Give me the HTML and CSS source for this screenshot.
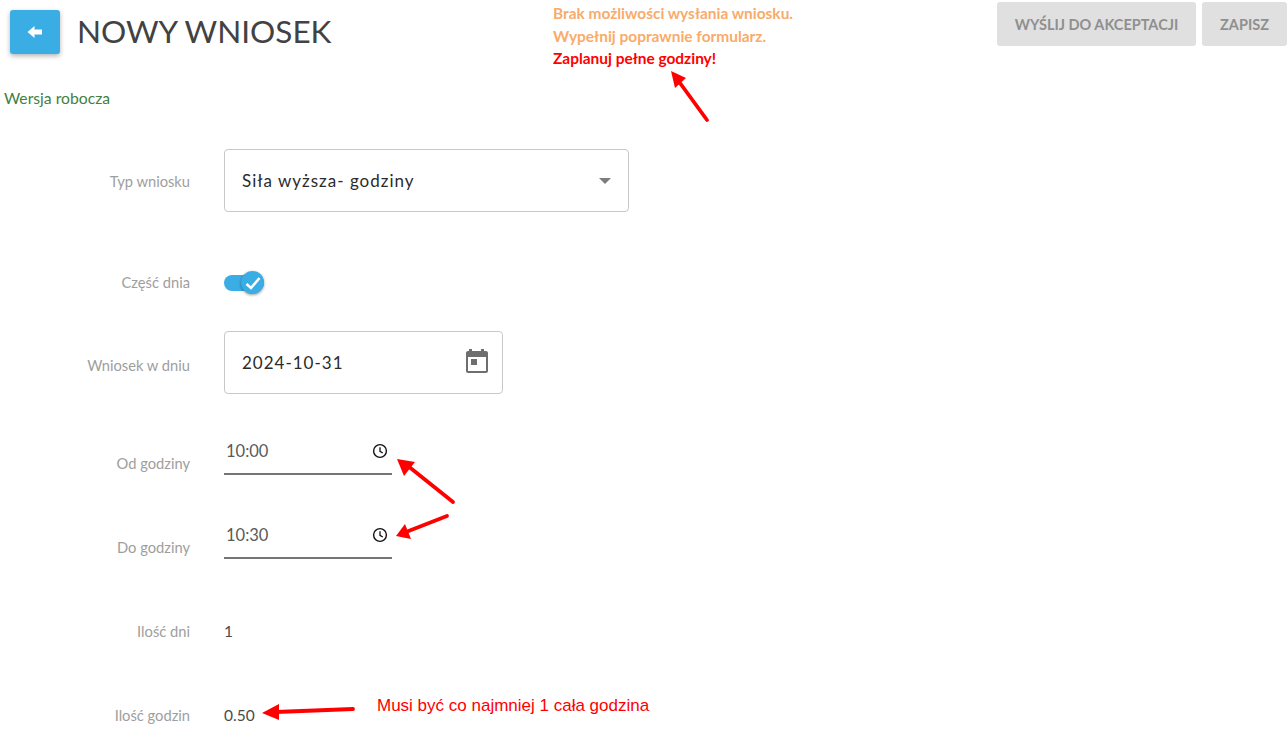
FILE: index.html
```html
<!DOCTYPE html>
<html lang="pl">
<head>
    <meta charset="UTF-8">
    <meta name="viewport" content="width=device-width, initial-scale=1.0">
    <title>Nowy wniosek</title>
    <link rel="stylesheet" href="styles.css">
</head>
<body>
    <div class="page">
        <header class="top">
            <button class="back" aria-label="Wstecz">
                <svg width="16" height="14" viewBox="0 0 16 14"><path d="M0.5 7 L7.5 1 V4.500 H15 V9.500 H7.500 V13 Z" fill="#fff"/></svg>
            </button>
            <h1>NOWY WNIOSEK</h1>
            <div class="messages">
                <p>Brak możliwości wysłania wniosku.</p>
                <p>Wypełnij poprawnie formularz.</p>
                <p class="danger">Zaplanuj pełne godziny!</p>
            </div>
            <div class="actions">
                <button class="btn btn-send">WYŚLIJ DO AKCEPTACJI</button>
                <button class="btn btn-save">ZAPISZ</button>
            </div>
        </header>

        <div class="status">Wersja robocza</div>

        <div class="row row-type">
            <label>Typ wniosku</label>
            <div class="field select">
                <span>Siła wyższa- godziny</span>
                <span class="caret"></span>
            </div>
        </div>

        <div class="row row-part">
            <label>Część dnia</label>
            <div class="toggle">
                <span class="knob">
                    <svg width="16" height="14" viewBox="0 0 16 14"><path d="M1.500 8 L6 12 L14.500 2" fill="none" stroke="#fff" stroke-width="2.500"/></svg>
                </span>
            </div>
        </div>

        <div class="row row-date">
            <label>Wniosek w dniu</label>
            <div class="field date">
                <span>2024-10-31</span>
                <svg class="cal" width="22" height="24" viewBox="0 0 22 24"><path fill="#6e6e6e" fill-rule="evenodd" d="M3 0h3v2h9V0h3v2h2c1.100 0 2 .9 2 2v18c0 1.100-.9 2-2 2H2c-1.100 0-2-.9-2-2V4c0-1.100.9-2 2-2h1zM2 8v14h18V8zM5 10h6v6H5z"/></svg>
            </div>
        </div>

        <div class="row row-time">
            <label>Od godziny</label>
            <div class="time">
                <span>10:00</span>
                <svg width="16" height="16" viewBox="0 0 16 16"><circle cx="8" cy="8" r="6.400" fill="none" stroke="#111" stroke-width="1.400"/><path d="M8 4.300 V8.300 L10.800 10" fill="none" stroke="#111" stroke-width="1.300"/></svg>
            </div>
        </div>

        <div class="row row-time">
            <label>Do godziny</label>
            <div class="time">
                <span>10:30</span>
                <svg width="16" height="16" viewBox="0 0 16 16"><circle cx="8" cy="8" r="6.400" fill="none" stroke="#111" stroke-width="1.400"/><path d="M8 4.300 V8.300 L10.800 10" fill="none" stroke="#111" stroke-width="1.300"/></svg>
            </div>
        </div>

        <div class="row row-days">
            <label>Ilość dni</label>
            <div class="value">1</div>
        </div>

        <div class="row row-hours">
            <label>Ilość godzin</label>
            <div class="value">0.50</div>
        </div>

        <!-- annotations drawn over the screenshot -->
        <svg class="arrows" width="1288" height="738" viewBox="0 0 1288 738">
            <g stroke="#f00" stroke-width="3.800" stroke-linecap="round" fill="#f00">
                <path d="M707 120 L680 83"/>
                <path d="M453 502 L408 466"/>
                <path d="M447 516 L406 532"/>
                <path d="M353 709 L276 712"/>
            </g>
            <g fill="#f00">
                <path d="M671 71 L686 78 L675 88 Z"/>
                <path d="M397 459 L415 462 L404 476 Z"/>
                <path d="M396 536 L405 524 L411 539 Z"/>
                <path d="M262 713 L279 704 L279 720 Z"/>
            </g>
        </svg>
        <div class="note">Musi być co najmniej 1 cała godzina</div>
    </div>
</body>
</html>
```

FILE: styles.css
```css
* {
    box-sizing: border-box;
}
html, body {
    margin: 0;
    padding: 0;
    background-color: #fff;
}
body {
    font-family: Lato, Arial, sans-serif;
    color: #424242;
}
p {
    margin: 0;
}
.page {
    position: relative;
    width: 1288px;
    height: 738px;
    overflow: hidden;
}
.top {
    display: flex;
    align-items: flex-start;
    height: 88px;
}
.back {
    width: 50px;
    height: 44px;
    margin: 10px 0 0 10px;
    padding: 0;
    display: flex;
    align-items: center;
    justify-content: center;
    background-color: #3aaee4;
    border: none;
    border-radius: 3px;
    box-shadow: 0 2px 5px rgba(0, 0, 0, 0.3);
}
h1 {
    width: 476px;
    margin: 10px 0 0 17px;
    font-size: 31.500px;
    line-height: 42px;
    font-weight: 400;
    color: #424242;
}
.messages {
    width: 444px;
    margin-top: 2px;
    font-size: 15.450px;
    line-height: 22.500px;
    font-weight: 700;
    color: #f9ab6b;
}
.messages .danger {
    color: #f00;
}
.actions {
    display: flex;
    gap: 6px;
    margin-top: 2px;
}
.btn {
    height: 44px;
    padding: 0;
    font-family: inherit;
    font-size: 14.500px;
    font-weight: 700;
    color: #8f8f8f;
    background-color: #e0e0e0;
    border: none;
    border-radius: 3px;
}
.btn-send {
    width: 199px;
}
.btn-save {
    width: 85px;
}
.status {
    height: 20px;
    padding-left: 4px;
    font-size: 15.700px;
    line-height: 20px;
    color: #3f7f3f;
}
.row {
    display: flex;
    align-items: center;
}
.row label {
    width: 190px;
    margin-right: 34px;
    text-align: right;
    font-size: 14.700px;
    color: #9e9e9e;
}
.row-type {
    height: 63px;
    margin-top: 41px;
}
.row-part {
    height: 42px;
    margin-top: 50px;
}
.row-part label {
    padding-bottom: 2px;
}
.row-date {
    height: 63px;
    margin-top: 27px;
}
.row-date label {
    padding-top: 5px;
}
.row-time {
    height: 47px;
    margin-top: 37px;
}
.row-date + .row-time {
    margin-top: 34px;
}
.row-time label {
    padding-top: 22px;
}
.row-days {
    height: 42px;
    margin-top: 51px;
}
.row-hours {
    height: 42px;
    margin-top: 42px;
}
.field {
    display: flex;
    align-items: center;
    justify-content: space-between;
    height: 63px;
    padding: 0 14px 0 17px;
    font-size: 17px;
    letter-spacing: 1px;
    color: #2b2b2b;
    border: 1px solid #c8c8c8;
    border-radius: 4px;
}
.select {
    width: 405px;
}
.caret {
    width: 0;
    height: 0;
    margin-right: 3px;
    border-left: 6px solid transparent;
    border-right: 6px solid transparent;
    border-top: 6px solid #7d7d7d;
}
.date {
    width: 279px;
    padding-right: 14px;
}
.cal {
    margin-bottom: 3px;
}
.toggle {
    position: relative;
    width: 40px;
    height: 16px;
    background-color: #3aaee4;
    border-radius: 8px;
}
.knob {
    position: absolute;
    top: -4px;
    right: 0;
    width: 23px;
    height: 23px;
    display: flex;
    align-items: center;
    justify-content: center;
    background-color: #3aaee4;
    border-radius: 50%;
    box-shadow: 0 1px 3px rgba(0, 0, 0, 0.4);
}
.time {
    display: flex;
    align-items: center;
    justify-content: space-between;
    width: 168px;
    height: 47px;
    padding: 0 4px 0 2px;
    font-size: 16.500px;
    color: #5a5a5a;
    border-bottom: 2px solid #757575;
}
.value {
    font-size: 15.500px;
    color: #4a4a4a;
}
.arrows {
    position: absolute;
    top: 0;
    left: 0;
    pointer-events: none;
}
.note {
    position: absolute;
    top: 696px;
    left: 377px;
    font-family: "Liberation Sans", Arial, sans-serif;
    font-size: 17px;
    line-height: 19px;
    color: #f00;
}
```
